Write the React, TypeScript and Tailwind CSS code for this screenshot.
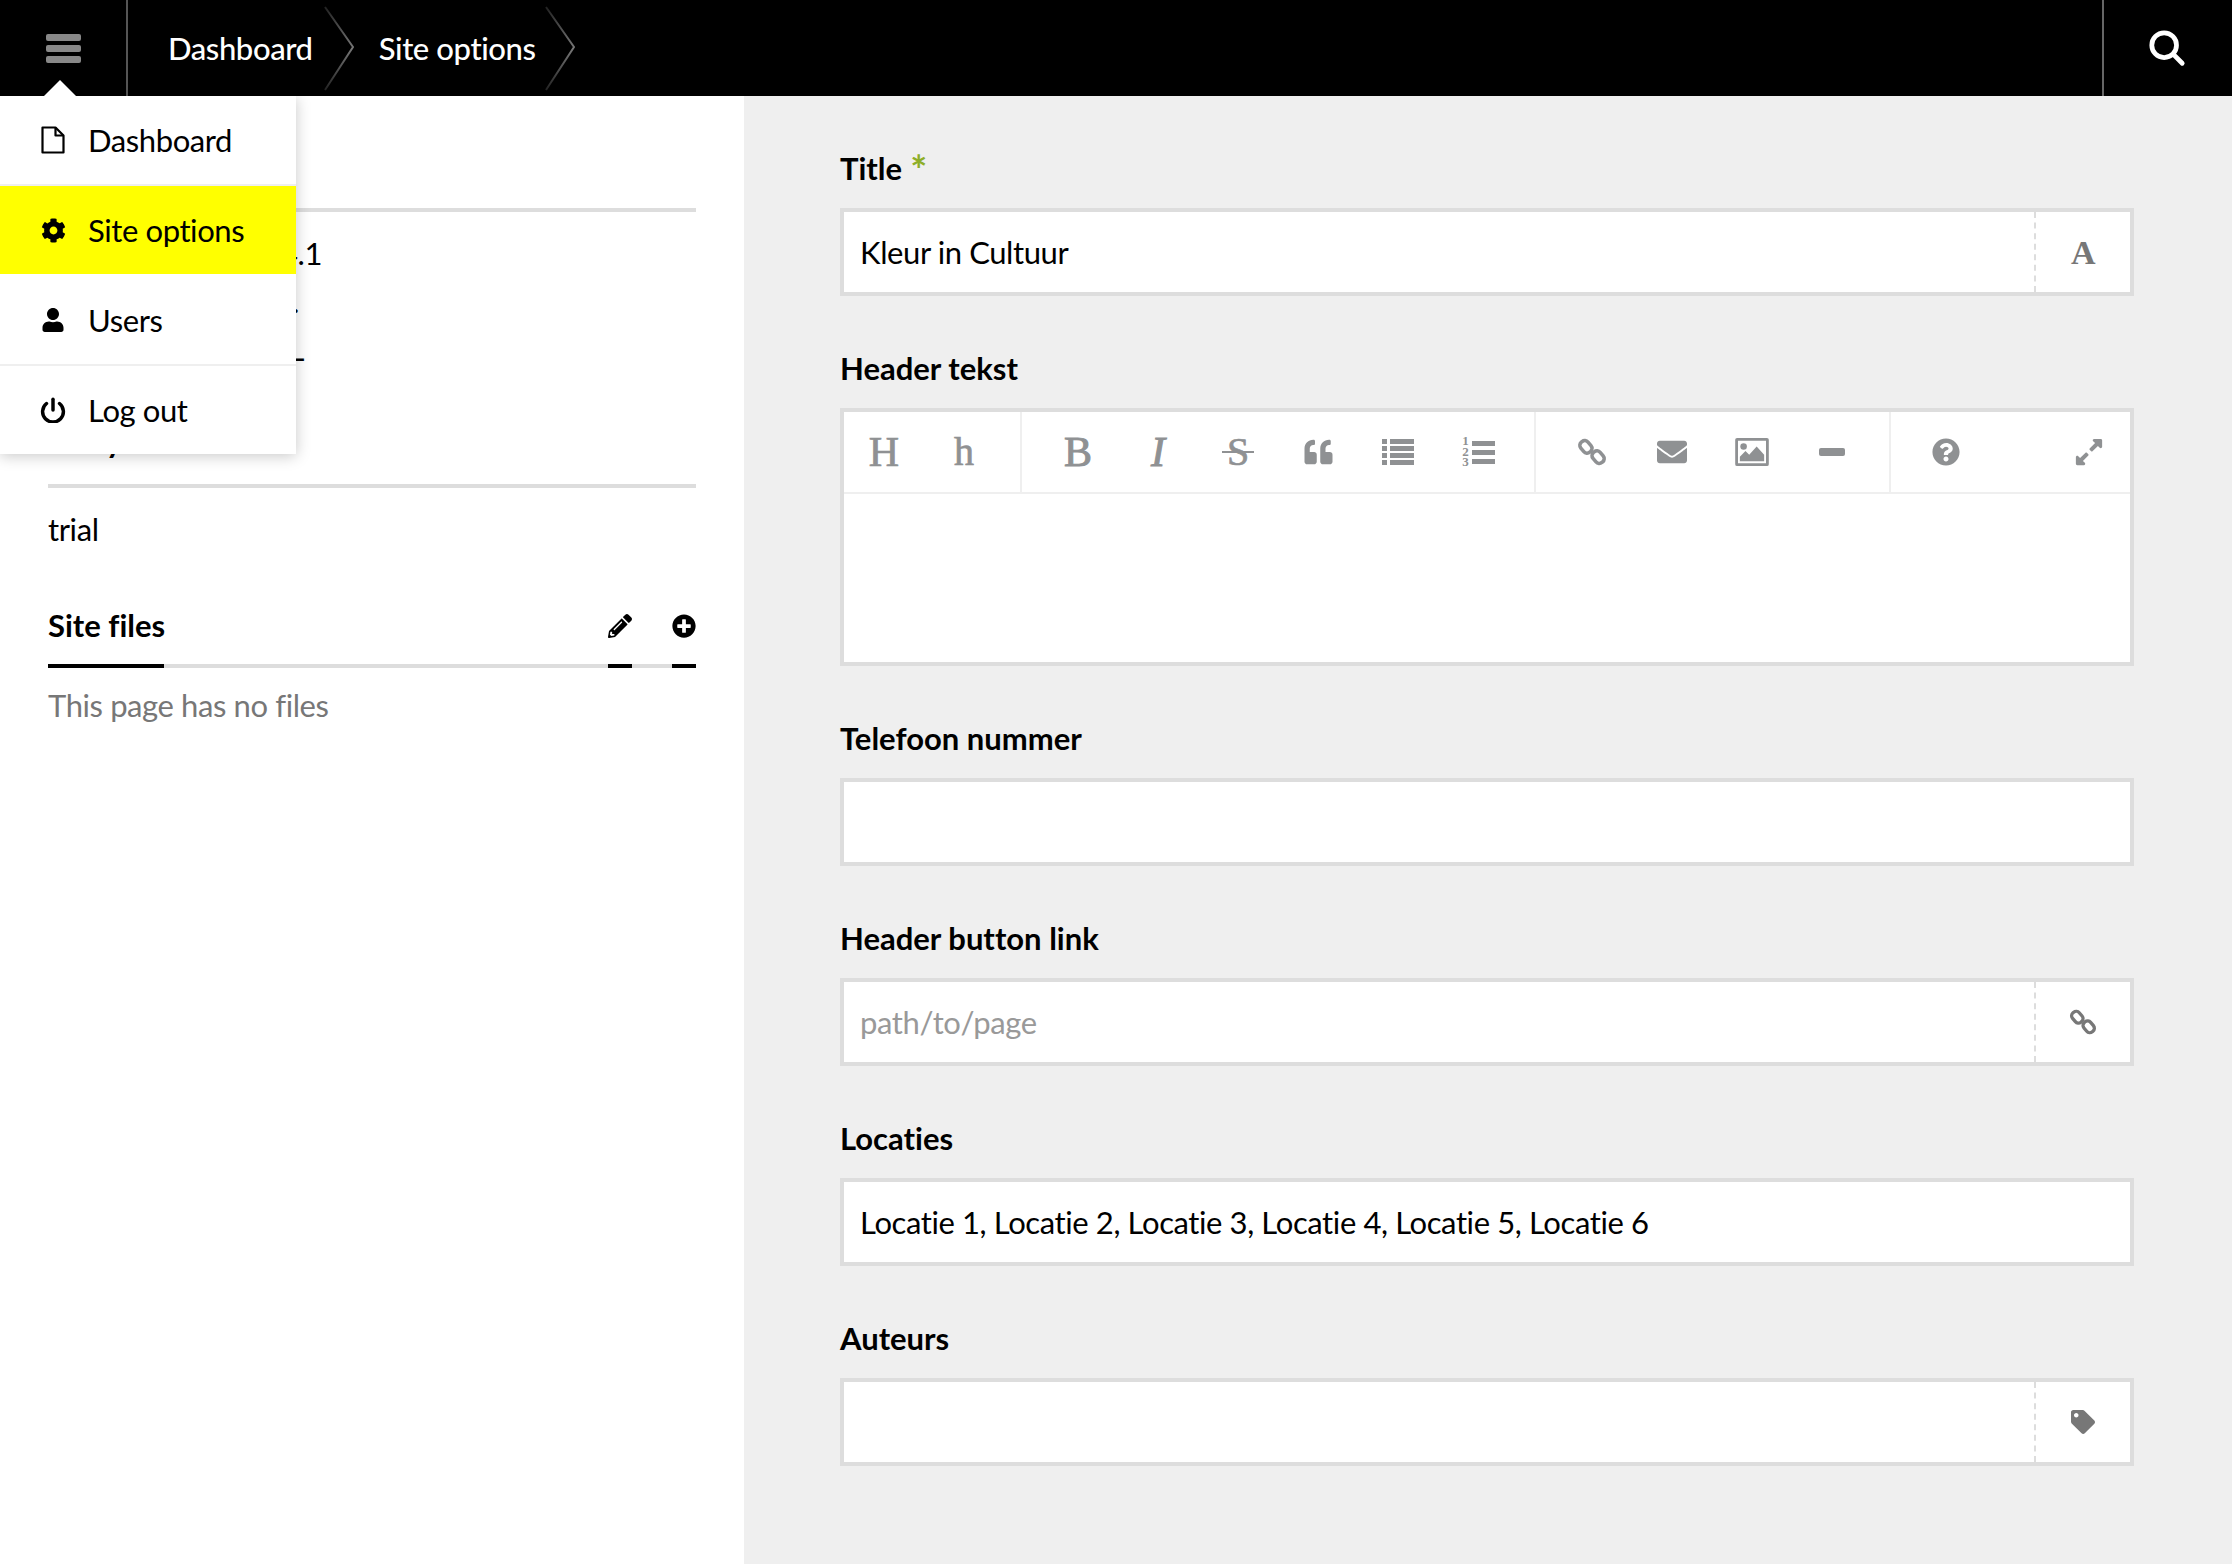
import React from 'react';
import {FaCog, FaUser, FaPencilAlt, FaPlusCircle, FaQuoteLeft, FaEnvelope, FaQuestionCircle, FaExpandAlt, FaTag} from 'react-icons/fa';

const font = "font-['Lato','Noto_Sans',sans-serif]";
const serif = "font-['Liberation_Serif',serif]";

const ChainIcon = ({className}: {className?: string}) => (
  <svg viewBox="0 0 32 32" className={className} fill="none" stroke="currentColor" strokeWidth={3.8}>
    <rect x="2.5" y="5.5" width="14" height="10" rx="4.5" transform="rotate(50 9.5 10.5)" />
    <rect x="15.5" y="16.5" width="14" height="10" rx="4.5" transform="rotate(50 22.5 21.5)" />
  </svg>
);

const ImageIcon = ({className}: {className?: string}) => (
  <svg viewBox="0 0 36 30" className={className} fill="currentColor">
    <path fillRule="evenodd" d="M2 0h32a2 2 0 0 1 2 2v26a2 2 0 0 1-2 2H2a2 2 0 0 1-2-2V2a2 2 0 0 1 2-2zm1 3v24h30V3H3z" />
    <circle cx="9" cy="9" r="3.5" />
    <path d="M5 25v-5l6-6 4 4 8-9 8 9v7z" />
  </svg>
);

const PowerIcon = ({className}: {className?: string}) => (
  <svg viewBox="0 0 24 24" className={className} fill="none" stroke="currentColor" strokeWidth={3.2} strokeLinecap="round">
    <path d="M12 2v10" />
    <path d="M6 6a9.6 9.6 0 1 0 12 0" />
  </svg>
);

const PageIcon = ({className}: {className?: string}) => (
  <svg viewBox="0 0 24 28" className={className} fill="none" stroke="currentColor" strokeWidth={2.2} strokeLinejoin="round">
    <path d="M1.5 1.5h13l8 8v17h-21z" />
    <path d="M14.5 1.5v8h8" />
  </svg>
);

const ListIcon = ({className}: {className?: string}) => (
  <svg viewBox="0 0 32 26" className={className} fill="currentColor">
    <path d="M0 0h5v5H0zM8 0h24v5H8zM0 7h5v5H0zM8 7h24v5H8zM0 14h5v5H0zM8 14h24v5H8zM0 21h5v5H0zM8 21h24v5H8z" />
  </svg>
);

const OrderedIcon = () => (
  <div className="flex items-center gap-[2px]">
    <div className="flex w-[8px] flex-col text-center text-[13px] font-bold leading-[10.5px] tracking-normal">
      <span>1</span>
      <span>2</span>
      <span>3</span>
    </div>
    <div className="flex flex-col gap-[4px]">
      <span className="h-[5px] w-[23px] bg-current" />
      <span className="h-[5px] w-[23px] bg-current" />
      <span className="h-[5px] w-[23px] bg-current" />
    </div>
  </div>
);

const Chevron = () => (
  <svg viewBox="0 0 32 96" className="h-[96px] w-[32px] shrink-0" fill="none">
    <defs>
      <linearGradient id="crumb" x1="0" y1="0" x2="0" y2="1">
        <stop offset="0" stopColor="#222" />
        <stop offset="0.5" stopColor="#777" />
        <stop offset="1" stopColor="#222" />
      </linearGradient>
    </defs>
    <path d="M2 7 L30 47 L2 90" stroke="url(#crumb)" strokeWidth={2} />
  </svg>
);

const Tool = ({children}: {children: React.ReactNode}) => (
  <div className="flex h-full w-[80px] items-center justify-center text-[#8f9193]">{children}</div>
);

const Field = ({label, required, children}: {label: string; required?: boolean; children: React.ReactNode}) => (
  <div className="mb-[48px]">
    <div className="mb-[16px] flex h-[48px] items-center text-[31px] font-bold leading-[48px] tracking-normal text-black">
      {label}
      {required && <span className="relative top-[2px] ml-[8px] h-[48px] text-[40px] leading-[48px] text-[#8dae28]">*</span>}
    </div>
    {children}
  </div>
);

const TextInput = ({value, placeholder, addon}: {value?: string; placeholder?: string; addon?: React.ReactNode}) => (
  <div className="flex h-[88px] border-4 border-[#ddd] bg-white">
    <input
      readOnly
      value={value ?? ''}
      placeholder={placeholder}
      className="min-w-0 flex-1 bg-transparent pl-[16px] text-[31px] text-black outline-none placeholder:text-[#999]"
    />
    {addon && (
      <div className="flex w-[96px] shrink-0 items-center justify-center border-l-2 border-dashed border-[#ddd] text-[#777]">{addon}</div>
    )}
  </div>
);

const MenuItem = ({icon, label, active}: {icon: React.ReactNode; label: string; active?: boolean}) => (
  <div className={`flex h-[88px] items-center text-black ${active ? 'bg-[#ff0]' : 'bg-white'}`}>
    <div className="ml-[36px] mr-[18px] flex w-[34px] shrink-0 items-center justify-center">{icon}</div>
    <span className="text-[31px]">{label}</span>
  </div>
);

export default function App() {
  return (
    <div className={`${font} relative min-h-[1564px] bg-white tracking-[-0.4px] text-black [font-variant-ligatures:none]`}>
      <header className="flex h-[96px] items-stretch bg-black text-white">
        <div className="flex w-[128px] shrink-0 flex-col items-center justify-center gap-[4px] border-r-2 border-[#555]">
          <span className="h-[7px] w-[35px] rounded-[2px] bg-[#888]" />
          <span className="h-[7px] w-[35px] rounded-[2px] bg-[#888]" />
          <span className="h-[7px] w-[35px] rounded-[2px] bg-[#888]" />
        </div>
        <nav className="flex items-center pl-[40px] text-[31px] font-medium">
          <span>Dashboard</span>
          <span className="ml-[10px] mr-[24px]"><Chevron /></span>
          <span>Site options</span>
          <span className="ml-[8px]"><Chevron /></span>
        </nav>
        <div className="ml-auto flex w-[130px] items-center justify-center border-l-2 border-[#666] pr-[2px]">
          <svg viewBox="0 0 40 40" className="h-[38px] w-[38px]" fill="none" stroke="currentColor" strokeWidth={5} strokeLinecap="round">
            <circle cx="17" cy="17" r="13" />
            <path d="M27 27l9 9" />
          </svg>
        </div>
      </header>

      {/* menu over the sidebar */}
      <div className="absolute left-0 top-[96px] z-10 w-[296px] bg-white shadow-[0_2px_14px_rgba(0,0,0,0.22)]">
        <div className="absolute left-[44px] top-[-16px] h-0 w-0 border-x-[16px] border-b-[16px] border-x-transparent border-b-white" />
        <MenuItem icon={<PageIcon className="h-[28px] w-[24px]" />} label="Dashboard" />
        <div className="h-[2px] bg-[#efefef]" />
        <MenuItem active icon={<FaCog className="h-[25px] w-[25px]" />} label="Site options" />
        <div className="h-[2px] bg-white" />
        <MenuItem icon={<FaUser className="h-[24px] w-[22px]" />} label="Users" />
        <div className="h-[2px] bg-[#efefef]" />
        <MenuItem icon={<PowerIcon className="h-[26px] w-[26px]" />} label="Log out" />
      </div>

      <div className="flex">
        <aside className="w-[744px] shrink-0 px-[48px] pt-[49px] text-[31px]">
          <div className="flex h-[48px] items-center font-bold tracking-normal">Kirby version</div>
          <div className="mt-[15px] border-t-4 border-[#ddd] pt-[17px]">
            <div className="flex h-[48px] w-[274px] justify-end whitespace-nowrap leading-[48px]">Toolkit version 2.4.1</div>
            <div className="flex h-[48px] w-[251px] justify-end whitespace-nowrap leading-[48px]">Kirby site installed.</div>
            <div className="flex h-[48px] w-[256px] justify-end whitespace-nowrap leading-[48px]">Primary site URL</div>
          </div>
          <div className="mt-[44px] flex h-[48px] items-center font-bold tracking-normal">Kirby license</div>
          <div className="mt-[19px] border-t-4 border-[#ddd] pt-[17px]">
            <div className="h-[48px] leading-[48px]">trial</div>
          </div>
          <div className="mt-[48px] flex h-[48px] items-center justify-between font-bold tracking-normal">
            <span>Site files</span>
          </div>
          <div className="relative mt-[15px] h-[4px] bg-[#ddd]">
            <span className="absolute left-0 top-0 h-[4px] w-[116px] bg-black" />
            <span className="absolute left-[560px] top-0 h-[4px] w-[24px] bg-black" />
            <span className="absolute right-0 top-0 h-[4px] w-[24px] bg-black" />
            <FaPencilAlt className="absolute left-[560px] top-[-50px] h-[24px] w-[24px]" />
            <FaPlusCircle className="absolute right-0 top-[-50px] h-[24px] w-[24px]" />
          </div>
          <div className="mt-[13px] h-[48px] leading-[48px] text-[#777]">This page has no files</div>
        </aside>

        <main className="min-h-[1468px] flex-1 bg-[#efefef] pl-[96px] pr-[98px] pt-[48px]">
          <Field label="Title" required>
            <TextInput
              value="Kleur in Cultuur"
              addon={<span className={`${serif} text-[34px] font-bold`}>A</span>}
            />
          </Field>
          <Field label="Header tekst">
            <div className="h-[258px] border-4 border-[#ddd] bg-white">
              <div className={`${serif} flex h-[82px] items-center border-b-2 border-[#efefef] tracking-normal`}>
                <div className="flex h-full items-center border-r-2 border-[#efefef] pr-[16px]">
                  <Tool><span className="text-[42px] leading-none [-webkit-text-stroke:0.7px_currentColor]">H</span></Tool>
                  <Tool><span className="text-[40px] leading-none [-webkit-text-stroke:0.7px_currentColor]">h</span></Tool>
                </div>
                <div className="flex h-full items-center border-r-2 border-[#efefef] pl-[16px] pr-[16px]">
                  <Tool><span className="text-[42px] leading-none [-webkit-text-stroke:1px_currentColor]">B</span></Tool>
                  <Tool><span className="text-[42px] italic leading-none [-webkit-text-stroke:1px_currentColor]">I</span></Tool>
                  <Tool>
                    <span className="relative text-[40px] leading-none [-webkit-text-stroke:0.7px_currentColor]">
                      S
                      <span className="absolute left-[-5px] right-[-5px] top-[19px] h-[2px] bg-[#8f9193]" />
                    </span>
                  </Tool>
                  <Tool><FaQuoteLeft className="h-[28px] w-[31px]" /></Tool>
                  <Tool><ListIcon className="h-[26px] w-[32px]" /></Tool>
                  <Tool><OrderedIcon /></Tool>
                </div>
                <div className="flex h-full items-center border-r-2 border-[#efefef] pl-[16px] pr-[17px]">
                  <Tool><ChainIcon className="h-[30px] w-[30px]" /></Tool>
                  <Tool><FaEnvelope className="h-[30px] w-[32px]" /></Tool>
                  <Tool><ImageIcon className="h-[28px] w-[34px]" /></Tool>
                  <Tool><span className="h-[8px] w-[26px] rounded-[2px] bg-current" /></Tool>
                </div>
                <div className="flex h-full flex-1 items-center justify-between pl-[15px] pr-[1px]">
                  <Tool><FaQuestionCircle className="h-[28px] w-[28px]" /></Tool>
                  <Tool><FaExpandAlt className="h-[30px] w-[30px]" /></Tool>
                </div>
              </div>
            </div>
          </Field>
          <Field label="Telefoon nummer">
            <TextInput />
          </Field>
          <Field label="Header button link">
            <TextInput placeholder="path/to/page" addon={<ChainIcon className="h-[28px] w-[28px]" />} />
          </Field>
          <Field label="Locaties">
            <TextInput value="Locatie 1, Locatie 2, Locatie 3, Locatie 4, Locatie 5, Locatie 6" />
          </Field>
          <Field label="Auteurs">
            <TextInput addon={<FaTag className="h-[24px] w-[24px]" />} />
          </Field>
        </main>
      </div>
    </div>
  );
}
